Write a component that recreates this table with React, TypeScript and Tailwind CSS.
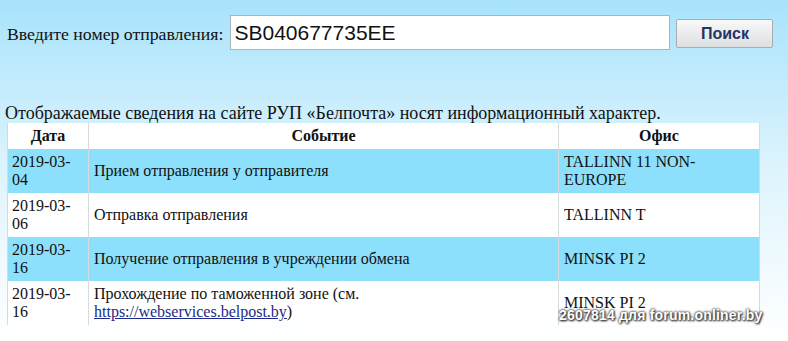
import React from "react";

type Row = { date: string; event: React.ReactNode; office: string; hl: boolean };

const rows: Row[] = [
  { date: "2019-03-04", event: "Прием отправления у отправителя", office: "TALLINN 11 NON-EUROPE", hl: true },
  { date: "2019-03-06", event: "Отправка отправления", office: "TALLINN T", hl: false },
  { date: "2019-03-16", event: "Получение отправления в учреждении обмена", office: "MINSK PI 2", hl: true },
  {
    date: "2019-03-16",
    event: (
      <>
        Прохождение по таможенной зоне (см.{" "}
        <a href="#" className="text-[#1b2a8a] underline">
          https://webservices.belpost.by
        </a>
        )
      </>
    ),
    office: "MINSK PI 2",
    hl: false,
  },
];

export default function App() {
  return (
    <div className="relative w-[788px] h-[341px] overflow-hidden bg-gradient-to-b from-[#a7e3fb] via-[#def4fd] to-[#ffffff] font-['Liberation_Serif','Times_New_Roman',serif] text-[16px] leading-[18px] text-[#111]">
      <div className="flex items-start pl-[7px] pt-[15px] h-[51px]">
        <span className="mt-[9px] text-[17.75px] leading-[20px]">Введите номер отправления:</span>
        <input
          readOnly
          value="SB040677735EE"
          className="ml-[7px] w-[440px] h-[35px] border border-[#a9b4bc] bg-white px-[3px] font-['Liberation_Sans',Arial,sans-serif] text-[21px] text-[#111] outline-none"
        />
        <button className="ml-[6px] mt-[4px] w-[97px] h-[29px] rounded-[2px] border border-[#a8adb2] bg-gradient-to-b from-[#f8f8f8] to-[#dedfe1] font-['Liberation_Sans',Arial,sans-serif] text-[16px] font-bold text-[#1f3468]">
          Поиск
        </button>
      </div>

      <p className="mt-[52px] pl-[5px] text-[18px] leading-[20px]">
        Отображаемые сведения на сайте РУП «Белпочта» носят информационный характер.
      </p>

      <table className="ml-[7px] w-[752px] table-fixed border-collapse">
        <colgroup>
          <col className="w-[81px]" />
          <col className="w-[470px]" />
          <col className="w-[201px]" />
        </colgroup>
        <thead>
          <tr className="bg-white h-[26px]">
            <th className="border-l border-[#d6dadc] px-[4px] p-0 text-center font-bold">Дата</th>
            <th className="border-l border-[#d6dadc] px-[4px] p-0 text-center font-bold">Событие</th>
            <th className="border-x border-[#d6dadc] px-[4px] p-0 text-center font-bold">Офис</th>
          </tr>
        </thead>
        <tbody>
          {rows.map((r, i) => (
            <tr key={i} className={r.hl ? "bg-[#8de0fb]" : "bg-white"}>
              <td className="border-l border-[#d6dadc] px-[4px] py-[4px] align-middle">{r.date}</td>
              <td className="border-l border-[#d6dadc] px-[5px] py-[4px] align-middle">{r.event}</td>
              <td className="border-x border-[#d6dadc] px-[5px] py-[4px] align-middle">{r.office}</td>
            </tr>
          ))}
        </tbody>
      </table>

      <div className="absolute left-[559px] top-[306px] font-['Liberation_Sans',Arial,sans-serif] text-[14px] font-bold text-white tracking-[0.2px] [text-shadow:0_0_2px_#333,0_0_3px_#444,1px_1px_2px_#222]">
        2607814 для forum.onliner.by
      </div>
    </div>
  );
}
